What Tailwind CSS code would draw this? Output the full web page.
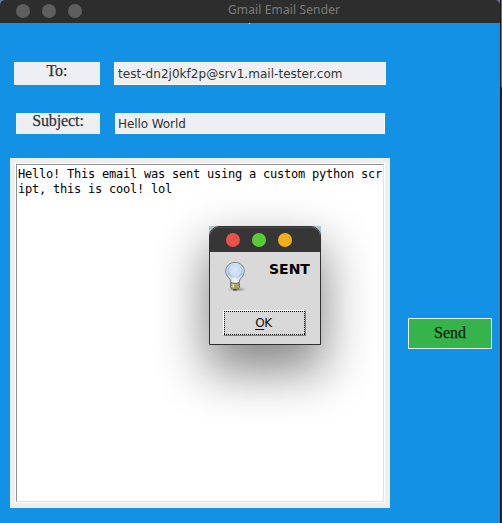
<!DOCTYPE html>
<html lang="en">
<head>
<meta charset="utf-8">
<title>Gmail Email Sender</title>
<script src="https://cdn.jsdelivr.net/npm/@tailwindcss/browser@4"></script>
</head>
<body class="w-[502px] h-[523px] overflow-hidden bg-[#777595] font-['DejaVu_Sans',sans-serif]">
<div class="flex w-[502px] h-[523px]">
  <main class="w-[500px] h-[523px] shrink-0 bg-[#1291e5] rounded-t-[5px] overflow-hidden flex flex-col">
    <header class="relative h-[23px] shrink-0 bg-[#2d2d2d] flex items-start pl-4">
      <div class="flex gap-3 pt-1">
        <span class="size-3.5 rounded-full bg-[#5e5e5e]"></span>
        <span class="size-3.5 rounded-full bg-[#5e5e5e]"></span>
        <span class="size-3.5 rounded-full bg-[#5e5e5e]"></span>
      </div>
      <h1 class="ml-[146px] mt-px text-[12px] leading-[18px] tracking-[0.13px] text-[#7c7c7c] whitespace-nowrap font-['Noto_Sans',sans-serif]">Gmail Email Sender</h1>
    </header>
    <div class="h-px w-px ml-[249px] shrink-0 bg-white"></div>
    <div class="flex mt-[38px] ml-3.5 gap-3.5 h-[23px] shrink-0">
      <label class="w-[86px] bg-[#eeeff2] text-center text-[16px] leading-[18px] text-[#2e3436] [-webkit-text-stroke:0.25px_#2e3436] font-['Liberation_Serif',serif]">To:</label>
      <div class="w-[272px] bg-[#eeeff2] border border-white pl-[3px] text-[12px] leading-[22px] tracking-[0.04px] text-[#2e3436] whitespace-nowrap">test-dn2j0kf2p@srv1.mail-tester.com</div>
    </div>
    <div class="flex mt-7 ml-4 gap-[15px] h-[21px] shrink-0">
      <label class="w-[84px] bg-[#eeeff2] text-center text-[16px] leading-[16px] tracking-[-0.1px] text-[#2e3436] [-webkit-text-stroke:0.25px_#2e3436] font-['Liberation_Serif',serif]">Subject:</label>
      <div class="w-[270px] bg-[#eeeff2] border border-white pl-[2px] text-[12px] leading-[20px] tracking-[-0.08px] text-[#2e3436] whitespace-nowrap">Hello World</div>
    </div>
    <div class="flex mt-6 ml-2.5 shrink-0">
      <section class="relative w-[380px] h-[350px] bg-[#efeff1] p-[5px]">
        <div class="h-[340px] w-[370px] border border-white">
          <div class="h-[338px] w-[368px] border border-t-[#929292] border-l-[#929292] border-r-[#e2e2e2] border-b-[#e2e2e2] bg-white">
            <p class="pl-px pt-[2px] text-[12px] leading-[15px] tracking-[-0.224px] text-black whitespace-pre font-['DejaVu_Sans_Mono',monospace]">Hello! This email was sent using a custom python scr
ipt, this is cool! lol</p>
          </div>
        </div>
        <div role="dialog" class="absolute left-[199px] top-[68px] w-[112px] h-[119px] bg-[#a9c5d5] shadow-[0_23px_50px_3px_rgba(0,0,0,0.48)]">
          <div class="w-[112px] h-[119px] bg-[#d9d9d9] border border-[#303030] rounded-t-[10px] overflow-hidden">
            <div class="h-[25px] bg-[#363636] border-t border-[#4a4d4e] flex gap-3 pl-4 pt-[5px]">
              <span class="size-3.5 rounded-full bg-[#e95149]"></span>
              <span class="size-3.5 rounded-full bg-[#5aca37]"></span>
              <span class="size-3.5 rounded-full bg-[#f1ae1b]"></span>
            </div>
            <div class="flex h-[58px] pl-[13px] pt-[8px]">
              <svg width="26" height="34" viewBox="0 0 26 34">
                <defs>
                  <linearGradient id="glass" x1="0" y1="0" x2="0" y2="1"><stop offset="0" stop-color="#a9cbf2"/><stop offset=".55" stop-color="#9fc0ea"/><stop offset=".8" stop-color="#d5dce4"/><stop offset="1" stop-color="#b9bdc1"/></linearGradient>
                  <radialGradient id="shade"><stop offset="0" stop-color="#555" stop-opacity=".75"/><stop offset="1" stop-color="#888" stop-opacity="0"/></radialGradient>
                  <radialGradient id="shine"><stop offset="0" stop-color="#dfeaf6"/><stop offset="1" stop-color="#c3daf3"/></radialGradient>
                </defs>
                <ellipse cx="14" cy="29.300" rx="10" ry="2.500" fill="url(#shade)"/>
                <path d="M8 23C8 18 2.700 17 2.700 11.500C2.700 6 6.900 2.500 12 2.500S21.300 6 21.300 11.500C21.300 17 16 18 16 23Z" fill="url(#glass)" stroke="#717b8b" stroke-width="1"/>
                <path d="M9 22C8.800 17.500 3.700 16 3.700 11.500C3.700 6.500 7.500 3.500 12 3.500S20.300 6.500 20.300 11.500C20.300 16 15.200 17.500 15 22" fill="none" stroke="#e9f2fb" stroke-width=".8"/>
                <circle cx="12.200" cy="10.200" r="5.800" fill="url(#shine)" stroke="#e4effa" stroke-width=".6"/>
                <path d="M9.500 22.500L8.300 17L10.500 18.500L12 16L13.500 18.500L15.700 17L14.500 22.500Z" fill="#eef1f1" stroke="#d3d8db" stroke-width=".6"/>
                <path d="M7.500 23Q12 24.300 16.500 23V27.500Q15.500 29.300 13.500 29.300H10.500Q8.500 29.300 7.500 27.500Z" fill="#bcba80" stroke="#737148" stroke-width=".9"/>
                <path d="M8 25.300Q12 26.500 16 25.300M8.500 27.500Q12 28.500 15.500 27.500" fill="none" stroke="#747148" stroke-width=".7"/>
                <path d="M10.300 24V27.500" stroke="#efedc0" stroke-width="1.500"/>
                <path d="M10.300 29.900H13.700" stroke="#3d3d36" stroke-width="1.300"/>
              </svg>
              <strong class="ml-5 mt-px text-[14px] leading-[16px] text-black">SENT</strong>
            </div>
            <div class="ml-[13px] w-[83px] h-[26px] border border-t-white border-l-white border-r-[#828282] border-b-[#828282]">
              <button class="relative block w-[81px] h-6 text-[12px] leading-6 text-[#111] text-center pr-0.5">
                <svg class="absolute inset-0" width="81" height="24" fill="none" stroke="#000" stroke-dasharray="1 1" shape-rendering="crispEdges"><path d="M0 .5H81M0 23.500H81M.5 0V24M80.500 0V24"/></svg>
                <span class="tracking-[-0.3px]"><span class="underline underline-offset-[2px]">O</span>K</span>
              </button>
            </div>
          </div>
        </div>
      </section>
      <button class="ml-[18px] mt-40 w-[84px] h-[31px] border border-[#e5f5ea] bg-[#34b44b] text-[16px] leading-[27px] pb-[2px] text-[#10210f] [-webkit-text-stroke:0.25px_#10210f] font-['Liberation_Serif',serif]">Send</button>
    </div>
  </main>
  <aside class="w-0.5 flex flex-col"><div class="h-[87px] bg-[#777079] border-l border-[#17161b]"></div><div class="grow bg-[#292929] border-l border-[#0b0b0c]"></div></aside>
</div>
</body>
</html>
